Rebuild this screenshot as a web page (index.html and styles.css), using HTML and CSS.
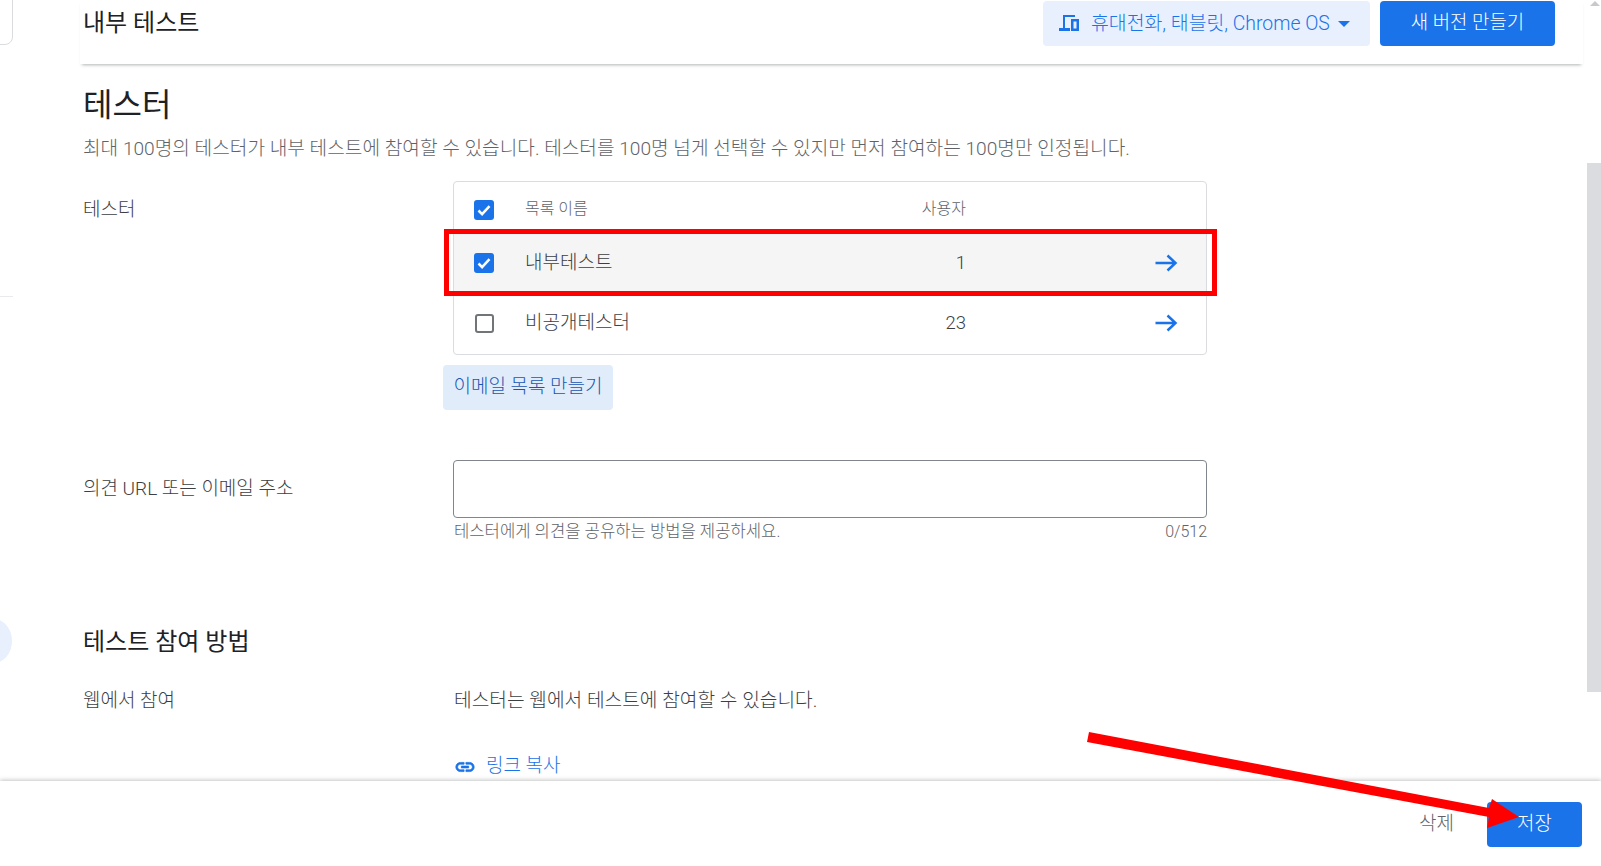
FILE: index.html
```html
<!DOCTYPE html>
<html lang="ko">
<head>
<meta charset="utf-8">
<title>내부 테스트</title>
<link rel="stylesheet" href="styles.css">
</head>
<body>
<div class="app">
  <div class="edge-card"></div>
  <div class="edge-line"></div>
  <div class="edge-circle"></div>

  <header class="topbar">
    <h1 class="page-title">내부 테스트</h1>
    <div class="top-actions">
      <button class="device-btn">
        <svg class="device-icon" viewBox="0 0 20 16"><path fill="currentColor" d="M4 0h12v2H6v11h5v3H0v-3h4V0z"/><path fill="currentColor" fill-rule="evenodd" d="M12 4h8v12h-8V4zm2.500 2.500v7h3v-7h-3z"/></svg>
        <span class="btn-text">휴대전화, 태블릿, Chrome OS</span>
        <span class="caret"></span>
      </button>
      <button class="primary-btn top-primary">새 버전 만들기</button>
    </div>
  </header>

  <main class="content">
    <h2 class="section-title">테스터</h2>
    <p class="section-desc">최대 100명의 테스터가 내부 테스트에 참여할 수 있습니다. 테스터를 100명 넘게 선택할 수 있지만 먼저 참여하는 100명만 인정됩니다.</p>

    <div class="form-row testers-row">
      <div class="form-label">테스터</div>
      <div class="form-field">
        <div class="list-table">
          <div class="list-row list-head">
            <span class="check on"><svg viewBox="0 0 20 20"><path d="M4.5 10.500l3.600 3.600 7.400-8" /></svg></span>
            <span class="list-name">목록 이름</span>
            <span class="list-users">사용자</span>
            <span class="list-go"></span>
          </div>
          <div class="list-row list-item selected">
            <span class="check on"><svg viewBox="0 0 20 20"><path d="M4.5 10.500l3.600 3.600 7.400-8" /></svg></span>
            <span class="list-name">내부테스트</span>
            <span class="list-users">1</span>
            <span class="list-go"><svg viewBox="0 0 24 24"><path d="M1.500 12h20M13.500 4.500l8 7.500-8 7.500" /></svg></span>
          </div>
          <div class="list-row list-item">
            <span class="check off"></span>
            <span class="list-name">비공개테스터</span>
            <span class="list-users">23</span>
            <span class="list-go"><svg viewBox="0 0 24 24"><path d="M1.500 12h20M13.500 4.500l8 7.500-8 7.500" /></svg></span>
          </div>
        </div>
        <button class="soft-btn">이메일 목록 만들기</button>
      </div>
    </div>

    <div class="form-row feedback-row">
      <div class="form-label">의견 URL 또는 이메일 주소</div>
      <div class="form-field">
        <div class="text-input"></div>
        <div class="helper"><span>테스터에게 의견을 공유하는 방법을 제공하세요.</span><span class="counter">0/512</span></div>
      </div>
    </div>

    <h3 class="sub-title">테스트 참여 방법</h3>
    <div class="form-row join-row">
      <div class="form-label">웹에서 참여</div>
      <div class="form-field">
        <div class="join-text">테스터는 웹에서 테스트에 참여할 수 있습니다.</div>
        <a class="copy-link">
          <svg viewBox="0 0 24 24"><path fill="currentColor" stroke="currentColor" stroke-width=".8" d="M3.900 12c0-1.710 1.390-3.100 3.100-3.100h4V7H7c-2.760 0-5 2.240-5 5s2.240 5 5 5h4v-1.900H7c-1.710 0-3.100-1.390-3.100-3.100zM8 13h8v-2H8v2zm9-6h-4v1.900h4c1.710 0 3.100 1.390 3.100 3.100s-1.390 3.100-3.100 3.100h-4V17h4c2.760 0 5-2.240 5-5s-2.240-5-5-5z"/></svg>
          <span>링크 복사</span>
        </a>
      </div>
    </div>
  </main>

  <footer class="footer">
    <button class="text-btn">삭제</button>
    <button class="primary-btn save-btn">저장</button>
  </footer>

  <div class="scroll-arrow"></div>
  <div class="scroll-thumb"></div>

  <div class="red-box"></div>
  <svg class="red-arrow" viewBox="0 0 1601 866"><polygon points="1089,732 1087,742 1489,817 1487,828 1519,817 1492,799 1489,808" /></svg>
</div>
</body>
</html>
```

FILE: styles.css
```css
* { box-sizing: border-box; }
html, body { margin: 0; padding: 0; height: 100%; background: #fff; overflow: hidden; }
body { font-family: Roboto, "Noto Sans CJK KR", sans-serif; font-weight: 300; color: #3c4043; }
button { font-family: inherit; font-weight: inherit; border: 0; cursor: pointer; padding: 0; }
h1, h2, h3, p { margin: 0; font-weight: 300; }

.app { position: relative; width: 1601px; height: 866px; display: flex; flex-direction: column; overflow: hidden; }

.edge-card { position: absolute; left: -10px; top: -10px; width: 23px; height: 55px; border: 1px solid #dadce0; border-radius: 8px; }
.edge-line { position: absolute; left: 0; top: 296px; width: 13px; height: 1px; background: #e8eaed; }
.edge-circle { position: absolute; left: -24px; top: 619px; width: 36px; height: 44px; border-radius: 50%; background: #e8f0fe; }

.topbar { flex: none; height: 64px; margin-left: 80px; margin-right: 18px; padding: 0 28px 0 3px; display: flex; align-items: flex-start; justify-content: space-between; background: #fff; box-shadow: 0 3px 3px -2px rgba(60,64,67,.4); position: relative; }
.page-title { font-size: 24px; line-height: 47px; color: #202124; font-weight: 400; }
.top-actions { display: flex; gap: 10px; padding-top: 1px; }
.device-btn { width: 327px; height: 45px; display: flex; align-items: center; padding: 0 16px; gap: 12px; border-radius: 4px; background: #e8f0fe; color: #1a73e8; font-size: 19.4px; white-space: nowrap; }
.btn-text { padding-bottom: 5px; }
.device-icon { width: 20px; height: 16px; flex: none; margin-bottom: 1px; }
.caret { width: 0; height: 0; border-left: 6px solid transparent; border-right: 6px solid transparent; border-top: 6px solid #1a73e8; margin-left: -4px; }
.primary-btn { background: #1a73e8; color: #fff; border-radius: 4px; font-size: 18.9px; padding-bottom: 7px; }
.top-primary { width: 175px; height: 45px; }

.content { flex: 1; min-height: 0; overflow: hidden; padding: 18px 0 0 83px; }
.section-title { font-size: 32px; line-height: 46px; color: #202124; font-weight: 400; }
.section-desc { font-size: 19.15px; line-height: 28px; margin-top: 7px; color: #5f6368; white-space: nowrap; }

.form-row { display: flex; }
.form-label { width: 370px; flex: none; font-size: 19px; line-height: 26px; color: #3c4043; }
.form-field { width: 754px; flex: none; }
.testers-row { margin-top: 18px; }
.testers-row .form-label { padding-top: 16px; }

.list-table { border: 1px solid #dadce0; border-radius: 4px; height: 174px; }
.list-row { display: flex; align-items: center; padding-left: 20px; }
.list-head { height: 51px; font-size: 16px; color: #5f6368; }
.list-head .check { margin-top: 5px; }
.list-head .list-name, .list-head .list-users { padding-bottom: 1px; }
.list-item { height: 60px; font-size: 19px; }
.list-item .list-name { padding-bottom: 6px; }
.selected { background: #f5f5f5; }
.check { width: 20px; height: 20px; flex: none; border-radius: 3px; }
.check svg { display: block; width: 20px; height: 20px; fill: none; stroke: #fff; stroke-width: 2.5; }
.on { background: #1a73e8; }
.off { border: 2px solid #70757a; border-radius: 3px; width: 19px; height: 19px; margin-left: 1px; }
.list-name { margin-left: 31px; width: 396px; }
.list-users { width: 45px; text-align: right; }
.list-item .list-users { font-size: 18.5px; }
.list-go { margin-left: 188px; width: 24px; height: 24px; }
.list-go svg { display: block; width: 24px; height: 24px; fill: none; stroke: #1a73e8; stroke-width: 2.5; }

.soft-btn { display: block; margin: 10px 0 0 -10px; width: 170px; height: 45px; padding-bottom: 6px; border-radius: 4px; background: #e1ecfb; color: #1a56b0; font-size: 19px; }

.feedback-row { margin-top: 50px; }
.feedback-row .form-label { padding-top: 16px; }
.text-input { height: 58px; border: 1px solid #80868b; border-radius: 4px; }
.helper { display: flex; justify-content: space-between; margin-top: 3px; padding-left: 1px; font-size: 16.65px; line-height: 22px; color: #5f6368; }
.counter { font-size: 16px; }

.sub-title { font-size: 24px; line-height: 36px; color: #202124; margin-top: 81px; font-weight: 400; }
.join-row { margin-top: 28px; }
.join-text { font-size: 19.2px; line-height: 26px; padding-left: 1px; }
.copy-link { display: flex; align-items: center; gap: 10px; margin-top: 39px; padding-left: 1px; color: #1a73e8; font-size: 19px; line-height: 26px; }
.copy-link svg { width: 22px; height: 22px; margin-top: 2px; }

.footer { flex: none; height: 85px; position: relative; display: flex; justify-content: flex-end; align-items: flex-start; padding: 21px 19px 0 0; gap: 33px; background: #fff; box-shadow: 0 -1px 4px rgba(60,64,67,.3); }
.text-btn { background: none; color: #5f6368; font-size: 19px; height: 45px; padding-bottom: 7px; }
.save-btn { width: 95px; height: 45px; }

.scroll-arrow { position: absolute; left: 1590px; top: 1px; width: 0; height: 0; border-left: 5px solid transparent; border-right: 5px solid transparent; border-bottom: 5px solid #c8c9cd; }
.scroll-thumb { position: absolute; left: 1587px; top: 163px; width: 14px; height: 529px; background: #dadce0; }

.red-box { position: absolute; left: 444px; top: 229px; width: 773px; height: 67px; border: 5px solid #f00; }
.red-arrow { position: absolute; left: 0; top: 0; width: 1601px; height: 866px; pointer-events: none; }
.red-arrow polygon { fill: #f00; }
```
